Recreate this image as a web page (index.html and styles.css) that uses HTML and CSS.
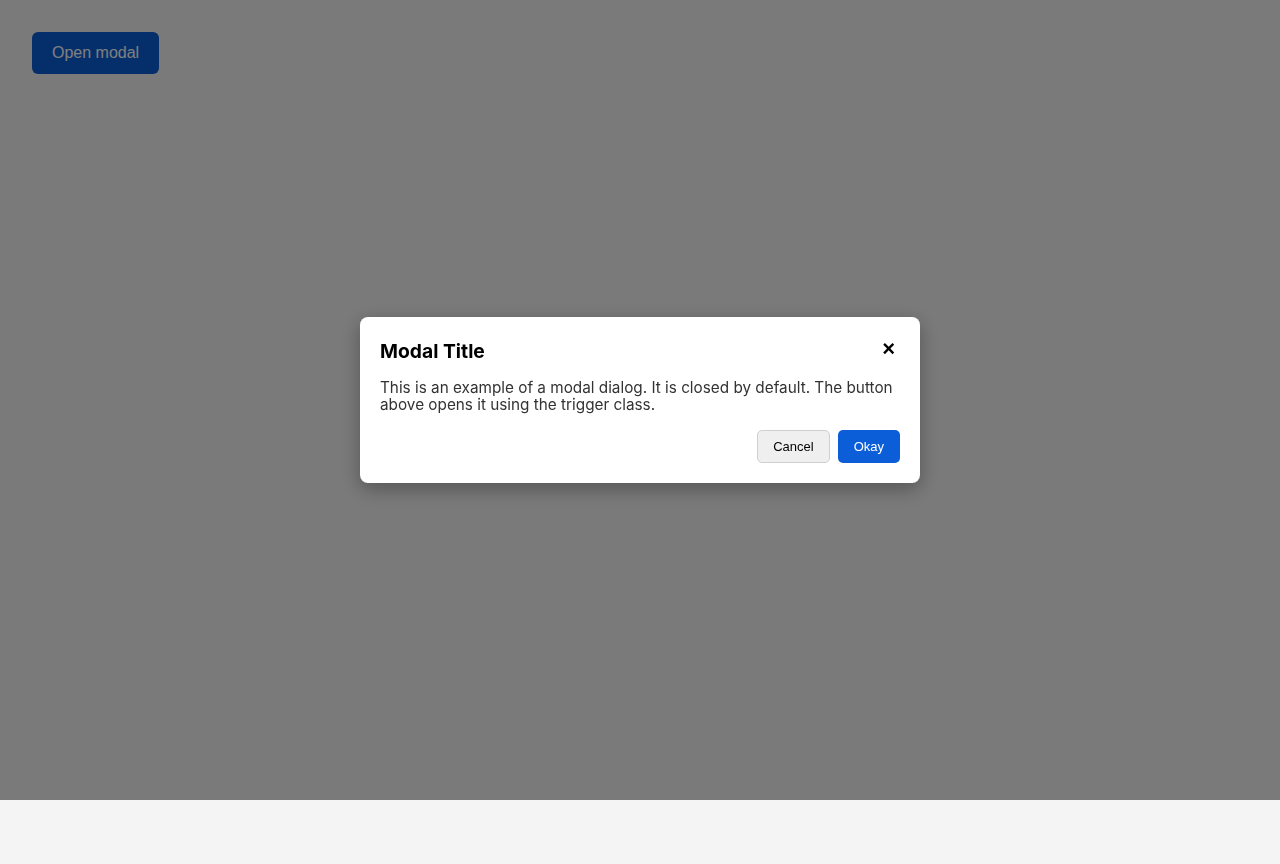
FILE: index.html
```html
<!DOCTYPE html>
<html lang="en">
<head>
<meta charset="utf-8">
<title>Modal</title>
<link rel="stylesheet" href="styles.css">
</head>
<body>
<button class="trigger">Open modal</button>
<div class="overlay">
  <div class="modal" role="dialog" aria-labelledby="modal-title">
    <div class="modal-header">
      <h2 class="modal-title" id="modal-title">Modal Title</h2>
      <button class="close" aria-label="Close">×</button>
    </div>
    <p class="modal-body">This is an example of a modal dialog. It is closed by default. The button above opens it using the trigger class.</p>
    <div class="modal-footer">
      <button class="btn btn-secondary">Cancel</button>
      <button class="btn btn-primary">Okay</button>
    </div>
  </div>
</div>
</body>
</html>
```
FILE: styles.css
```css
html, body {
  margin: 0;
  padding: 0;
}
body {
  background: #f4f4f4;
  padding: 32px;
  font-family: Inter, "Liberation Sans", sans-serif;
  min-height: 864px;
  box-sizing: border-box;
}
.trigger {
  font-family: "Liberation Sans", Arial, sans-serif;
  font-size: 16px;
  height: 42px;
  padding: 0 20px;
  border: 0;
  border-radius: 6px;
  background: #0b5ed7;
  color: #fff;
  display: block;
}
.overlay {
  position: fixed;
  top: 0;
  left: 0;
  width: 100%;
  height: 800px;
  background: rgba(0, 0, 0, 0.5);
  display: flex;
  align-items: center;
  justify-content: center;
}
.modal {
  width: 560px;
  box-sizing: border-box;
  background: #fff;
  border-radius: 8px;
  padding: 22px 20px 20px;
  box-shadow: 0 6px 20px rgba(0, 0, 0, 0.3);
}
.modal-header {
  display: flex;
  align-items: center;
  justify-content: space-between;
  height: 24px;
  margin-bottom: 16px;
}
.modal-title {
  margin: 0;
  font-size: 19.3px;
  font-weight: 700;
  line-height: 24px;
  color: #000;
}
.close {
  border: 0;
  background: none;
  padding: 0 5px 0 0;
  font-family: "Liberation Sans", Arial, sans-serif;
  font-weight: 700;
  font-size: 22px;
  line-height: 22px;
  color: #000;
  margin-top: -4px;
}
.modal-body {
  margin: 0 0 17px;
  font-size: 15.3px;
  line-height: 17px;
  color: #333;
}
.modal-footer {
  display: flex;
  justify-content: flex-end;
  gap: 8px;
}
.btn {
  font-family: "Liberation Sans", Arial, sans-serif;
  font-size: 13px;
  height: 33px;
  padding: 0 15px;
  border: 1px solid transparent;
  border-radius: 5px;
}
.btn-secondary {
  background: #efefef;
  border-color: #cfcfcf;
  color: #000;
}
.btn-primary {
  background: #0b5ed7;
  color: #fff;
}
```
